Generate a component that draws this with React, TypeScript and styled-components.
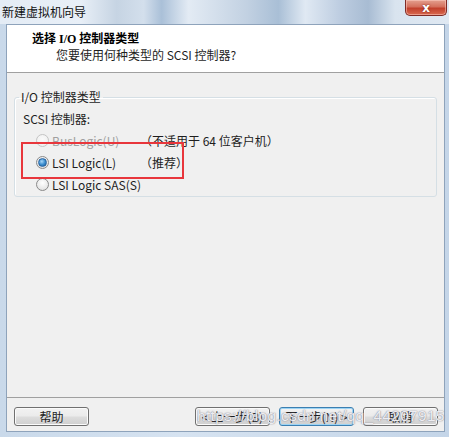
import React from "react";
import styled, { createGlobalStyle } from "styled-components";

const Global = createGlobalStyle`
  html, body { margin: 0; padding: 0; background: #ffffff; }
  body { font-family: "Noto Sans CJK SC", "Noto Sans", sans-serif; font-size: 12px; color: #1e1e1e; }
  * { box-sizing: border-box; }
`;

const Window = styled.div`
  width: 449px;
  height: 437px;
  display: flex;
  flex-direction: column;
  padding: 0 4px 5px 6px;
  background: linear-gradient(90deg, #c9d9ea 0%, #d6e3f1 40%, #c4d5e8 100%);
  position: relative;
  overflow: hidden;
`;

const TitleBar = styled.div`
  height: 24px;
  margin: 0 -4px 0 -6px;
  display: flex;
  justify-content: space-between;
  align-items: flex-start;
  background: linear-gradient(
    90deg,
    #e4ecf5 0%,
    #e8eff7 18%,
    #c6d4e3 26%,
    #d3dfec 32%,
    #aac0d8 36%,
    #e3ebf4 42%,
    #c2d1e2 55%,
    #a9bfd6 62%,
    #e0e9f3 68%,
    #bccce0 76%,
    #a8bcd3 82%,
    #d9e4ef 88%,
    #dfe8f2 100%
  );
`;

const TitleText = styled.span`
  padding: 4px 0 0 2px;
  line-height: 16px;
  font-size: 12px;
  color: #111;
`;

const CloseButton = styled.div`
  width: 42px;
  height: 16px;
  margin-right: 2px;
  border: 1px solid #7f2b26;
  border-top: none;
  border-radius: 0 0 5px 5px;
  background: linear-gradient(180deg, #e4a08f 0%, #d4705d 45%, #c2402c 55%, #d96a50 100%);
  box-shadow: inset 0 0 0 1px rgba(255, 210, 200, 0.5);
  display: flex;
  align-items: center;
  justify-content: center;
  color: #fff;
  font-family: "DejaVu Sans", sans-serif;
  font-weight: bold;
  font-size: 12px;
  line-height: 1;
  text-shadow: 0 0 2px #6a1b12;
`;

const Content = styled.div`
  flex: 1;
  display: flex;
  flex-direction: column;
  border: 1px solid #8ea3bb;
  background: #f0f0f0;
`;

const Header = styled.div`
  height: 48px;
  background: #ffffff;
  border-bottom: 1px solid #a0a0a0;
  padding: 7px 0 0 25px;
  display: flex;
  flex-direction: column;
`;

const HeaderTitle = styled.div`
  font-family: "Liberation Serif", "Noto Sans CJK SC", serif;
  font-weight: bold;
  font-size: 12px;
  line-height: 15px;
  color: #000;
`;

const HeaderSub = styled.div`
  padding-left: 24px;
  font-size: 12px;
  line-height: 15px;
  color: #1e1e1e;
`;

const Body = styled.div`
  flex: 1;
  padding: 17px 7px 0 7px;
`;

const GroupBox = styled.fieldset`
  margin: 0;
  padding: 0 0 1px 0;
  border: 1px solid #d5dfe5;
  border-radius: 3px;
  box-shadow: inset 1px 1px 0 #ffffff;
`;

const Legend = styled.legend`
  margin-left: 4px;
  padding: 0 2px;
  font-size: 12px;
  line-height: 14px;
  color: #1e1e1e;
`;

const FieldLabel = styled.div`
  padding: 7px 0 0 8px;
  font-size: 12px;
  line-height: 16px;
  color: #1e1e1e;
`;

const RadioList = styled.div`
  position: relative;
  margin-top: 2px;
  display: grid;
  grid-template-columns: 104px auto;
  grid-auto-rows: 22px;
  padding-left: 21px;
  align-items: center;
`;

const RadioCell = styled.label<{ $disabled?: boolean }>`
  display: flex;
  align-items: center;
  gap: 3px;
  white-space: nowrap;
  font-size: 12px;
  color: ${(p) => (p.$disabled ? "#a0a0a0" : "#1e1e1e")};
`;

const Note = styled.span`
  font-size: 12px;
  color: #1e1e1e;
  white-space: nowrap;
`;

const RadioCircle = styled.span<{ $checked?: boolean; $disabled?: boolean }>`
  width: 13px;
  height: 13px;
  border-radius: 50%;
  flex: none;
  border: 1px solid ${(p) => (p.$disabled ? "#c4c4c4" : "#8a8a8a")};
  background: ${(p) =>
    p.$disabled
      ? "radial-gradient(circle at 50% 40%, #fafafa 0%, #ececec 100%)"
      : "radial-gradient(circle at 50% 35%, #ffffff 0%, #e6e6e6 70%, #d4d4d4 100%)"};
  display: flex;
  align-items: center;
  justify-content: center;

  &::after {
    content: "";
    display: ${(p) => (p.$checked ? "block" : "none")};
    width: 7px;
    height: 7px;
    border-radius: 50%;
    background: radial-gradient(circle at 40% 35%, #a8d6f7 0%, #3d8fd0 50%, #1a5d98 100%);
    border: 1px solid #2a64a0;
  }
`;

const Annotation = styled.div`
  position: absolute;
  left: 6px;
  top: 13px;
  width: 163px;
  height: 37px;
  border: 2px solid #e8363c;
  pointer-events: none;
`;

const Footer = styled.div`
  position: relative;
  border-top: 1px solid #a0a0a0;
  padding: 9px 6px 5px 7px;
  display: flex;
  align-items: center;
`;

const Spacer = styled.div`
  flex: 1;
`;

const ButtonGroup = styled.div`
  display: flex;
  gap: 9px;
`;

const Button = styled.button<{ $primary?: boolean }>`
  width: 75px;
  height: 19px;
  padding: 0;
  border-radius: 3px;
  border: 1px solid ${(p) => (p.$primary ? "#3c7fb1" : "#707070")};
  background: linear-gradient(180deg, #f2f2f2 0%, #ebebeb 48%, #dddddd 52%, #cfcfcf 100%);
  box-shadow: ${(p) =>
    p.$primary ? "inset 0 0 0 1px #9cd4f5" : "inset 0 0 0 1px #fbfbfb"};
  font-family: "Noto Sans CJK SC", "Noto Sans", sans-serif;
  font-size: 12px;
  line-height: 17px;
  color: #1e1e1e;
`;

const Watermark = styled.div`
  position: absolute;
  left: 190px;
  top: 7px;
  font-family: "Liberation Sans", Arial, sans-serif;
  font-size: 15.5px;
  line-height: 22px;
  letter-spacing: 0.3px;
  color: rgba(248, 248, 252, 0.92);
  text-shadow: 0 0 1px rgba(110, 110, 125, 0.9), 0 0 2px rgba(150, 150, 160, 0.6);
  pointer-events: none;
  white-space: nowrap;
`;

export default function App() {
  return (
    <>
      <Global />
      <Window>
        <TitleBar>
          <TitleText>新建虚拟机向导</TitleText>
          <CloseButton>x</CloseButton>
        </TitleBar>
        <Content>
          <Header>
            <HeaderTitle>选择 I/O 控制器类型</HeaderTitle>
            <HeaderSub>您要使用何种类型的 SCSI 控制器?</HeaderSub>
          </Header>
          <Body>
            <GroupBox>
              <Legend>I/O 控制器类型</Legend>
              <FieldLabel>SCSI 控制器:</FieldLabel>
              <RadioList>
                <RadioCell $disabled>
                  <RadioCircle $disabled />
                  BusLogic(U)
                </RadioCell>
                <Note>（不适用于 64 位客户机）</Note>
                <RadioCell>
                  <RadioCircle $checked />
                  LSI Logic(L)
                </RadioCell>
                <Note>（推荐）</Note>
                <RadioCell>
                  <RadioCircle />
                  LSI Logic SAS(S)
                </RadioCell>
                <span />
                <Annotation />
              </RadioList>
            </GroupBox>
          </Body>
          <Footer>
            <Button>帮助</Button>
            <Spacer />
            <ButtonGroup>
              <Button>&lt; 上一步(B)</Button>
              <Button $primary>下一步(N) &gt;</Button>
              <Button>取消</Button>
            </ButtonGroup>
            <Watermark>https://blog.csdn.net/qq_44207915</Watermark>
          </Footer>
        </Content>
      </Window>
    </>
  );
}
